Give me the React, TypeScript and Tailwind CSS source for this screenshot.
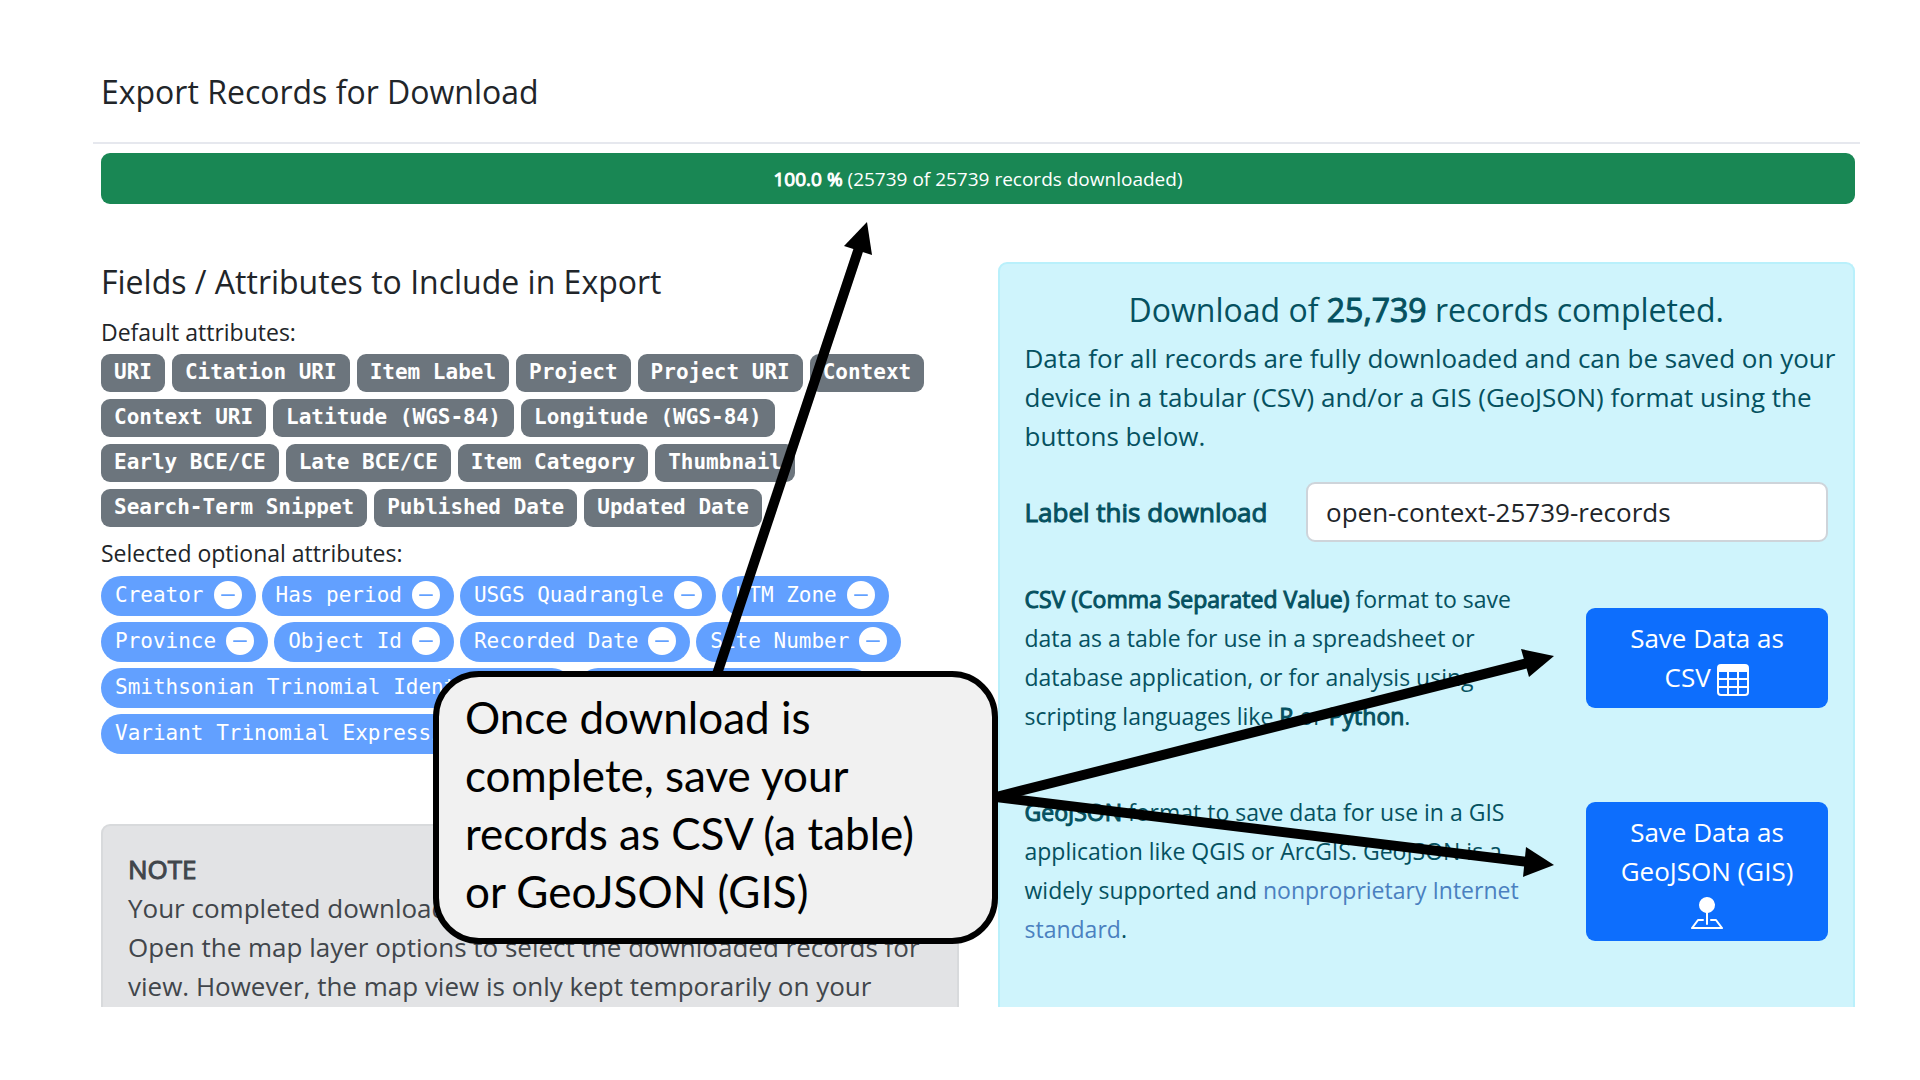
import React from "react";
import { BsDashCircleFill, BsPinMapFill, BsTable } from "react-icons/bs";

const defaultAttributes = [
  "URI",
  "Citation URI",
  "Item Label",
  "Project",
  "Project URI",
  "Context",
  "Context URI",
  "Latitude (WGS-84)",
  "Longitude (WGS-84)",
  "Early BCE/CE",
  "Late BCE/CE",
  "Item Category",
  "Thumbnail",
  "Search-Term Snippet",
  "Published Date",
  "Updated Date",
];

const optionalAttributes = [
  "Creator",
  "Has period",
  "USGS Quadrangle",
  "UTM Zone",
  "Province",
  "Object Id",
  "Recorded Date",
  "Site Number",
  "Smithsonian Trinomial Identifier",
  "Sortable Trinomial",
  "Variant Trinomial Expressions",
];

function Strong({ children }: { children: React.ReactNode }) {
  return (
    <strong className="font-normal [-webkit-text-stroke:1px_currentColor]">{children}</strong>
  );
}

function Fields() {
  return (
    <section className="pt-px">
      <h2 className="text-[32px] leading-[38px]">Fields / Attributes to Include in Export</h2>
      <p className="mt-[14px] text-[23px] leading-[34px]">Default attributes:</p>
      <ul className="mt-[5px] flex max-w-[840px] flex-wrap gap-[7px]">
        {defaultAttributes.map((name) => (
          <li
            key={name}
            className="flex h-[38px] items-center rounded-[9px] bg-[#6c757d] px-[13px] font-['DejaVu_Sans_Mono',monospace] text-[21px] font-bold text-white"
          >
            {name}
          </li>
        ))}
      </ul>
      <p className="mt-[9px] text-[23px] leading-[34px]">Selected optional attributes:</p>
      <ul className="mt-[6px] flex max-w-[840px] flex-wrap gap-[6px]">
        {optionalAttributes.map((name) => (
          <li
            key={name}
            className="flex h-10 items-center gap-[10px] rounded-full bg-[#62a0ff] px-[14px] font-['DejaVu_Sans_Mono',monospace] text-[21px] text-white"
          >
            {name}
            <button type="button" aria-label={"Remove " + name} className="-mt-[2px]">
              <BsDashCircleFill size={28} />
            </button>
          </li>
        ))}
      </ul>
    </section>
  );
}

function Note() {
  return (
    <section className="mt-[70px] grow rounded-t-[9px] border-2 border-b-0 border-[#d8dadc] bg-[#e2e3e5] px-[25px] pt-6 text-[26px] leading-[39px] text-[#41464b]">
      <p>
        <Strong>NOTE</Strong>
      </p>
      <p>Your completed download is on the map.</p>
      <p>
        Open the map layer options to select the downloaded records for view. However, the map view
        is only kept temporarily on your
      </p>
    </section>
  );
}

function SaveButton({ children }: { children: React.ReactNode }) {
  return (
    <button
      type="button"
      className="w-[242px] shrink-0 rounded-[9px] bg-[#0d6efd] px-8 py-[11px] text-center text-[26px] leading-[39px] text-white"
    >
      {children}
    </button>
  );
}

function Download() {
  return (
    <section className="rounded-t-[9px] border-2 border-b-0 border-[#b9f0fb] bg-[#cff4fc] px-[25px] pt-[27px] text-[26px] leading-[39px] text-[#055160]">
      <h2 className="text-center text-[32px] leading-[38px]">
        Download of <Strong>25,739</Strong> records completed.
      </h2>
      <p className="-mr-3 mt-[10px]">
        Data for all records are fully downloaded and can be saved on your device in a tabular (CSV)
        and/or a GIS (GeoJSON) format using the buttons below.
      </p>
      <div className="mt-[26px] flex items-center justify-between">
        <label htmlFor="download-label">
          <Strong>Label this download</Strong>
        </label>
        <input
          id="download-label"
          type="text"
          defaultValue="open-context-25739-records"
          className="h-[60px] w-[522px] rounded-[9px] border-2 border-[#ced4da] bg-white px-[18px] text-[#212529]"
        />
      </div>
      <div className="mt-[38px] flex items-center justify-between">
        <p className="w-[500px] text-[23px]">
          <Strong>CSV (Comma Separated Value)</Strong> format to save data as a table for use in a
          spreadsheet or database application, or for analysis using scripting languages like{" "}
          <Strong>R</Strong> or <Strong>Python</Strong>.
        </p>
        <SaveButton>
          Save Data as CSV <BsTable size={32} className="inline" />
        </SaveButton>
      </div>
      <div className="mt-[57px] flex items-center justify-between">
        <p className="w-[500px] text-[23px]">
          <Strong>GeoJSON</Strong> format to save data for use in a GIS application like QGIS or
          ArcGIS. GeoJSON is a widely supported and{" "}
          <a href="#geojson" className="text-[#4a80c0]">
            nonproprietary Internet standard
          </a>
          .
        </p>
        <SaveButton>
          Save Data as GeoJSON (GIS) <BsPinMapFill size={32} className="inline" />
        </SaveButton>
      </div>
    </section>
  );
}

function Annotation() {
  return (
    <>
      <svg
        className="pointer-events-none absolute top-0 left-0"
        width="1920"
        height="1080"
        viewBox="0 0 1920 1080"
        aria-hidden="true"
      >
        <g stroke="#000" strokeWidth="10">
          <line x1="717" y1="674" x2="859" y2="248" />
          <line x1="996" y1="797" x2="1528" y2="663" />
          <line x1="996" y1="797" x2="1528" y2="862" />
        </g>
        <polygon points="867,222 844,246 872,255" />
        <polygon points="1554,656 1521,649 1529,677" />
        <polygon points="1554,865 1526,847 1523,877" />
      </svg>
      <aside className="absolute top-[671px] left-[433px] w-[565px] rounded-[46px] border-6 border-black bg-[#f1f1f1] px-[26px] pt-[11px] pb-[18px] font-['Lato',sans-serif] text-[44px] leading-[58px] text-black">
        Once download is
        <br />
        complete, save your
        <br />
        records as CSV (a table)
        <br />
        or GeoJSON (GIS)
      </aside>
    </>
  );
}

export default function App() {
  return (
    <main className="relative flex min-h-screen flex-col bg-white pt-[73px] pr-[65px] pb-[73px] pl-[101px] font-['Open_Sans',sans-serif] text-[#212529]">
      <h1 className="text-[32px] leading-[38px]">Export Records for Download</h1>
      <hr className="-mr-[5px] -ml-2 mt-[31px] border-t-2 border-[#e6e8ee]" />
      <div
        role="progressbar"
        aria-valuenow={100}
        aria-label="Download progress"
        className="mt-[9px] flex h-[51px] items-center justify-center rounded-[9px] bg-[#198754] pt-px text-[19px] text-white"
      >
        <span>
          <Strong>100.0 %</Strong> (25739 of 25739 records downloaded)
        </span>
      </div>
      <div className="mt-[58px] grid grow grid-cols-2 gap-[39px]">
        <div className="flex flex-col">
          <Fields />
          <Note />
        </div>
        <Download />
      </div>
      <Annotation />
    </main>
  );
}
